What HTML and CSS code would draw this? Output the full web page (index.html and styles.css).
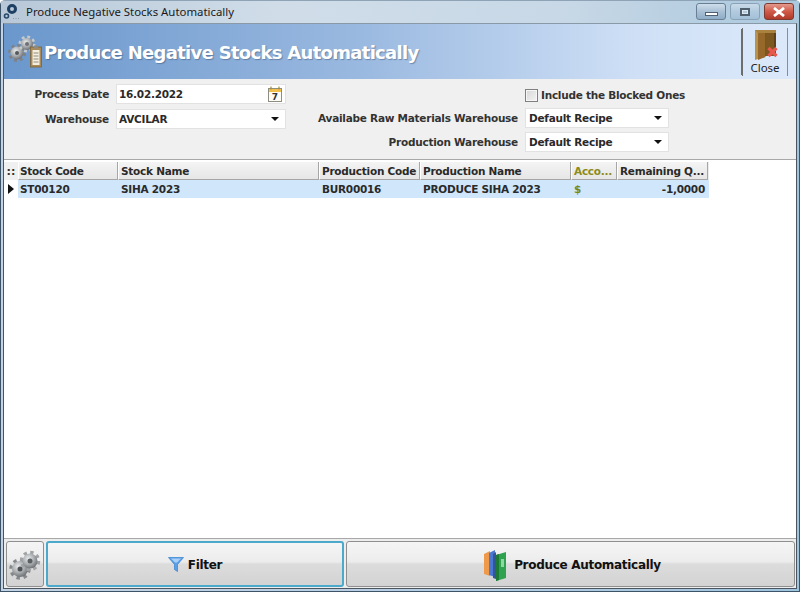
FILE: index.html
```html
<!DOCTYPE html>
<html lang="en">
<head>
<meta charset="utf-8">
<title>Produce Negative Stocks Automatically</title>
<link rel="stylesheet" href="styles.css">
</head>
<body>
<svg class="defs" width="0" height="0">
  <defs>
    <radialGradient id="metal" cx="40%" cy="35%" r="70%">
      <stop offset="0" stop-color="#e9ebec"/>
      <stop offset=".55" stop-color="#a9acaf"/>
      <stop offset="1" stop-color="#66696d"/>
    </radialGradient>
  </defs>
</svg>
<div class="window">
  <div class="titlebar">
    <svg class="app-icon" width="18" height="18" viewBox="0 0 18 18">
      <circle cx="9" cy="6" r="3.500" fill="none" stroke="#1d3f63" stroke-width="3"/>
      <circle cx="3.500" cy="13" r="2" fill="none" stroke="#27486b" stroke-width="1.600"/>
      <path d="M10 15h1v1h-1zM12.500 15h1v1h-1zM15 15h1v1h-1z" fill="#8c99a6"/>
    </svg>
    <span class="title-text">Produce Negative Stocks Automatically</span>
    <div class="win-buttons">
      <div class="win-btn"><span class="glyph-min"></span></div>
      <div class="win-btn win-btn-faded"><span class="glyph-max"></span></div>
      <div class="win-btn win-btn-close">
        <svg width="14" height="10" viewBox="0 0 14 10"><path d="M2 1 L12 9 M12 1 L2 9" stroke="#fff" stroke-width="2.800"/></svg>
      </div>
    </div>
  </div>
  <div class="content">
    <header class="banner">
      <svg class="banner-icon" width="34" height="34" viewBox="0 0 34 34">
        <circle cx="9" cy="19" r="7.500" fill="none" stroke="#7f8387" stroke-width="3" stroke-dasharray="3 2.900"/>
        <circle cx="9" cy="19" r="6.500" fill="url(#metal)"/>
        <circle cx="9" cy="19" r="2" fill="#55585c"/>
        <circle cx="19" cy="10" r="7" fill="none" stroke="#c5c8ca" stroke-width="3" stroke-dasharray="2.800 2.700"/>
        <circle cx="19" cy="10" r="6" fill="url(#metal)"/>
        <circle cx="19" cy="10" r="2" fill="#6d7074"/>
        <rect x="22.500" y="13" width="11" height="20" fill="#a98a58" stroke="#7b6238" stroke-width=".8"/>
        <rect x="24.500" y="16" width="7" height="15" fill="#f3eee0"/>
        <rect x="26" y="11.500" width="4" height="3" fill="#8a8a86"/>
        <path d="M25.500 19h5M25.500 22h5M25.500 25h5M25.500 28h5" stroke="#8f8a7a" stroke-width="1"/>
      </svg>
      <h1 class="banner-title">Produce Negative Stocks Automatically</h1>
      <div class="close-tool">
        <svg width="26" height="32" viewBox="0 0 26 32">
          <path d="M3 1h21v26H3z" fill="#5f4118"/>
          <path d="M3 1h21v3H3z" fill="#a98240"/>
          <path d="M6 4h7.500v24L6 31z" fill="#96692a"/>
          <path d="M14 4h8v23h-8z" fill="#7d5720"/>
          <path d="M3 1v30l3-1V4z" fill="#b8924f"/>
          <path d="M16.500 19 L24.500 27 M24.500 19 L16.500 27" stroke="#e8584f" stroke-width="3.200"/>
        </svg>
        <span class="close-label">Close</span>
      </div>
    </header>

    <section class="form">
      <div class="form-left">
        <div class="field">
          <label class="label">Process Date</label>
          <div class="input">
            <span class="value">16.02.2022</span>
            <svg class="calendar" width="14" height="16" viewBox="0 0 14 16">
              <rect x=".5" y="2.500" width="13" height="13" fill="#fdfdf6" stroke="#8d8d80"/>
              <rect x="1" y="3" width="12" height="3" fill="#f0c04a"/>
              <path d="M3 .5v3M11 .5v3" stroke="#a68a3c" stroke-width="1.200"/>
              <text class="calendar-num" x="7" y="14" text-anchor="middle">7</text>
            </svg>
          </div>
        </div>
        <div class="field">
          <label class="label">Warehouse</label>
          <div class="input">
            <span class="value">AVCILAR</span>
            <span class="arrow"></span>
          </div>
        </div>
      </div>
      <div class="form-right">
        <div class="check-row">
          <span class="checkbox"></span>
          <span class="label">Include the Blocked Ones</span>
        </div>
        <div class="field field-tight">
          <label class="label">Availabe Raw Materials Warehouse</label>
          <div class="input input-small">
            <span class="value">Default Recipe</span>
            <span class="arrow"></span>
          </div>
        </div>
        <div class="field field-tight">
          <label class="label">Production Warehouse</label>
          <div class="input input-small">
            <span class="value">Default Recipe</span>
            <span class="arrow"></span>
          </div>
        </div>
      </div>
    </section>

    <section class="table">
      <div class="row row-head">
        <div class="cell-ind"><span class="dots">::</span></div>
        <div class="th th-first">Stock Code</div>
        <div class="th">Stock Name</div>
        <div class="th">Production Code</div>
        <div class="th">Production Name</div>
        <div class="th th-accent">Acco...</div>
        <div class="th">Remaining Q...</div>
      </div>
      <div class="row row-data">
        <div class="cell-ind"><span class="pointer"></span></div>
        <div class="td td-first">ST00120</div>
        <div class="td">SIHA 2023</div>
        <div class="td">BUR00016</div>
        <div class="td">PRODUCE SIHA 2023</div>
        <div class="td td-accent">$</div>
        <div class="td td-num">-1,0000</div>
      </div>
    </section>

    <footer class="footer">
      <button class="btn btn-icon">
        <svg width="32" height="34" viewBox="0 0 32 34">
          <circle cx="11" cy="21" r="9" fill="none" stroke="#86898c" stroke-width="3.500" stroke-dasharray="3.400 3.670"/>
          <circle cx="11" cy="21" r="8" fill="url(#metal)"/>
          <circle cx="11" cy="21" r="2.500" fill="#4f5255"/>
          <circle cx="21" cy="13" r="8.500" fill="none" stroke="#a0a3a6" stroke-width="3.500" stroke-dasharray="3.300 3.370"/>
          <circle cx="21" cy="13" r="7.500" fill="url(#metal)"/>
          <circle cx="21" cy="13" r="2.500" fill="#5c5f62"/>
        </svg>
      </button>
      <button class="btn btn-filter">
        <svg width="16" height="15" viewBox="0 0 16 15"><path d="M.5 .5h15L9.500 7.500V14.500L6.500 12.500V7.500z" fill="#5c9fe6" stroke="#3f86d4" stroke-width=".8"/><path d="M3 1.500h10L9 5.500H7z" fill="#a9d0f6"/></svg>
        <span>Filter</span>
      </button>
      <button class="btn btn-produce">
        <svg width="24" height="32" viewBox="0 0 24 32">
          <path d="M1 5l6-3v25l-6-2z" fill="#ef9a4a"/>
          <path d="M6 4l6-3v27l-6-2z" fill="#4a78d0"/>
          <path d="M10 5l3-2v27l-3-1z" fill="#33559c"/>
          <path d="M13 6l10-3v26l-10 3z" fill="#2fa24f"/>
          <path d="M13 6l3-1v26l-3 1z" fill="#1c7a36"/>
          <path d="M18 10h3v8h-3z" fill="#8fd6a0"/>
        </svg>
        <span>Produce Automatically</span>
      </button>
    </footer>
  </div>
</div>
</body>
</html>
```

FILE: styles.css
```css
* { box-sizing: border-box; }
html, body { margin: 0; padding: 0; }
body {
  width: 800px;
  height: 592px;
  overflow: hidden;
  background: #fff;
  font-family: "DejaVu Sans", sans-serif;
}
.defs { display: block; height: 0; }
.window {
  width: 800px;
  height: 592px;
  display: flex;
  flex-direction: column;
  background: linear-gradient(90deg, #c3d3e4, #b6cde2 60%, #9fc4de);
  border: 1px solid #3c5368;
  border-top-color: #8ea3b5;
  border-radius: 5px 5px 0 0;
}
.titlebar {
  height: 22px;
  flex: none;
  display: flex;
  align-items: center;
  padding-left: 2px;
  background: linear-gradient(90deg, #b8c8d8, #d0dde9 35%, #c8d8e6 70%, #aac8de);
}
.app-icon { flex: none; }
.title-text {
  margin-left: 5px;
  padding-bottom: 2px;
  font: 11.400px "Noto Sans", sans-serif;
  color: #1a1a1a;
}
.win-buttons {
  margin-left: auto;
  margin-right: 5px;
  margin-top: -1px;
  display: flex;
  gap: 4px;
}
.win-btn {
  width: 30px;
  height: 17px;
  display: flex;
  align-items: center;
  justify-content: center;
  border: 1px solid #6b7f92;
  border-radius: 3px;
  background: linear-gradient(#cfdfec, #a9c0d5 50%, #8fadc6);
}
.win-btn-faded { background: linear-gradient(#c9dbe9, #b2cade 50%, #a3c0d8); border-color: #8aa2b7; }
.win-btn-close { border-color: #7c3a30; background: linear-gradient(#e39a8c, #cf5a48 50%, #b03a2a); }
.glyph-min { width: 13px; height: 4px; margin-top: 5px; background: #fff; border: 1px solid #50606e; }
.glyph-max { width: 10px; height: 8px; background: transparent; border: 2px solid #50606e; box-shadow: inset 0 0 0 1px #dfe8ef; }

.content {
  flex: 1;
  min-height: 0;
  margin: 0 2px 2px 2px;
  display: flex;
  flex-direction: column;
  background: #f0f0f0;
  border: 1px solid #4a5560;
  border-top-color: #8a99a6;
}
.banner {
  height: 55px;
  flex: none;
  display: flex;
  align-items: center;
  padding-left: 4px;
  background: linear-gradient(90deg, #6a97cc, #9ab9e0 45%, #cfe0f6 80%, #dce9fa);
}
.banner-icon { flex: none; margin: -1px 2px 0 0; }
.banner-title {
  margin: 2px 0 0;
  font: bold 18px "DejaVu Sans", sans-serif;
  letter-spacing: -0.7px;
  color: #fff;
  text-shadow: 1px 1px 1px rgba(50, 70, 100, .45);
}
.close-tool {
  margin-left: auto;
  margin-right: 8px;
  width: 46px;
  height: 48px;
  display: flex;
  flex-direction: column;
  align-items: center;
  padding-top: 1px;
  border-left: 1px solid #6d6d6d;
  border-right: 1px solid #8d8d8d;
  box-shadow: -2px 0 0 -1px #6d6d6d;
}
.close-label { font: 11.500px "Noto Sans", sans-serif; color: #222; line-height: 13px; }

.form {
  height: 81px;
  flex: none;
  display: flex;
  align-items: flex-start;
  background: #f0f0f0;
  border-bottom: 1px solid #a8a8a8;
}
.form-left {
  width: 282px;
  padding-top: 5px;
  display: flex;
  flex-direction: column;
  gap: 5px;
}
.form-right {
  width: 383px;
  padding-top: 9px;
  display: flex;
  flex-direction: column;
  align-items: flex-end;
}
.field { display: flex; justify-content: flex-end; align-items: center; gap: 7px; height: 20px; }
.field-tight { margin-top: 4px; }
.label {
  font: bold 10.500px "DejaVu Sans", sans-serif;
  letter-spacing: -0.25px;
  color: #333;
  white-space: nowrap;
}
.input {
  width: 170px;
  height: 20px;
  flex: none;
  display: flex;
  align-items: center;
  justify-content: space-between;
  padding: 0 5px 0 2px;
  background: #fff;
  border: 1px solid #e2e2e2;
}
.input-small { width: 144px; padding-left: 3px; }
.value {
  font: bold 10.500px "DejaVu Sans", sans-serif;
  letter-spacing: -0.25px;
  color: #2a2a2a;
  white-space: nowrap;
}
.arrow {
  width: 0;
  height: 0;
  margin-right: 1px;
  border-left: 4px solid transparent;
  border-right: 4px solid transparent;
  border-top: 4px solid #111;
}
.calendar { margin-right: -2px; }
.calendar-num { font: bold 9px "DejaVu Sans", sans-serif; fill: #333; }
.check-row {
  width: 158px;
  margin-right: -14px;
  margin-bottom: 2px;
  height: 14px;
  display: flex;
  align-items: center;
  gap: 3px;
}
.checkbox {
  width: 13px;
  height: 13px;
  flex: none;
  border: 1px solid #7f8080;
  background: linear-gradient(135deg, #d6d6d6, #f4f4f4);
  box-shadow: inset 0 0 0 1px #f6f6f6;
}

.table {
  flex: 1;
  min-height: 0;
  padding-top: 2px;
  background: #fff;
  border-bottom: 1px solid #a8a8a8;
}
.row {
  display: grid;
  grid-template-columns: 14px 100px 201px 101px 151px 46px 91px;
  width: 705px;
}
.row-head { height: 18px; background: #ececec; }
.row-data { height: 18px; background: #cfe6fb; }
.cell-ind { display: flex; align-items: center; justify-content: center; background: #f0f0f0; }
.row-data .cell-ind { background: #fff; }
.dots { font: bold 11px "DejaVu Sans", sans-serif; color: #333; line-height: 1; }
.pointer {
  width: 0;
  height: 0;
  border-top: 5px solid transparent;
  border-bottom: 5px solid transparent;
  border-left: 6px solid #111;
}
.th, .td {
  font: bold 10.500px/16px "DejaVu Sans", sans-serif;
  letter-spacing: -0.25px;
  padding-top: 1px;
  padding-left: 2px;
  white-space: nowrap;
  overflow: hidden;
  color: #2a2a2a;
}
.th {
  border-right: 1px solid #a6a6a6;
  border-bottom: 1px solid #a6a6a6;
  border-left: 1px solid #fff;
  background: linear-gradient(#f4f4f4, #e6e6e6);
}
.td { padding-left: 3px; }
.th-first { padding-left: 1px; }
.td-first { padding-left: 2px; }
.th-accent { color: #8b8b1e; }
.td-accent { color: #7c8a14; }
.td-num { text-align: right; padding-right: 3px; }

.footer {
  height: 49px;
  flex: none;
  display: flex;
  gap: 2px;
  padding: 2px 1px 0 2px;
  background: #ededed;
}
.btn {
  height: 46px;
  display: flex;
  align-items: center;
  justify-content: center;
  gap: 4px;
  padding: 1px 0 0;
  font: bold 12px "DejaVu Sans", sans-serif;
  letter-spacing: -0.3px;
  color: #111;
  background: linear-gradient(#f5f5f5, #ececec 45%, #dcdcdc 50%, #d3d3d3);
  border: 1px solid #8f8f8f;
  border-radius: 3px;
}
.btn-icon { width: 38px; }
.btn-filter { width: 298px; border: 2px solid #4ba9cc; }
.btn-produce { flex: 1; gap: 7px; padding-left: 3px; }
```
